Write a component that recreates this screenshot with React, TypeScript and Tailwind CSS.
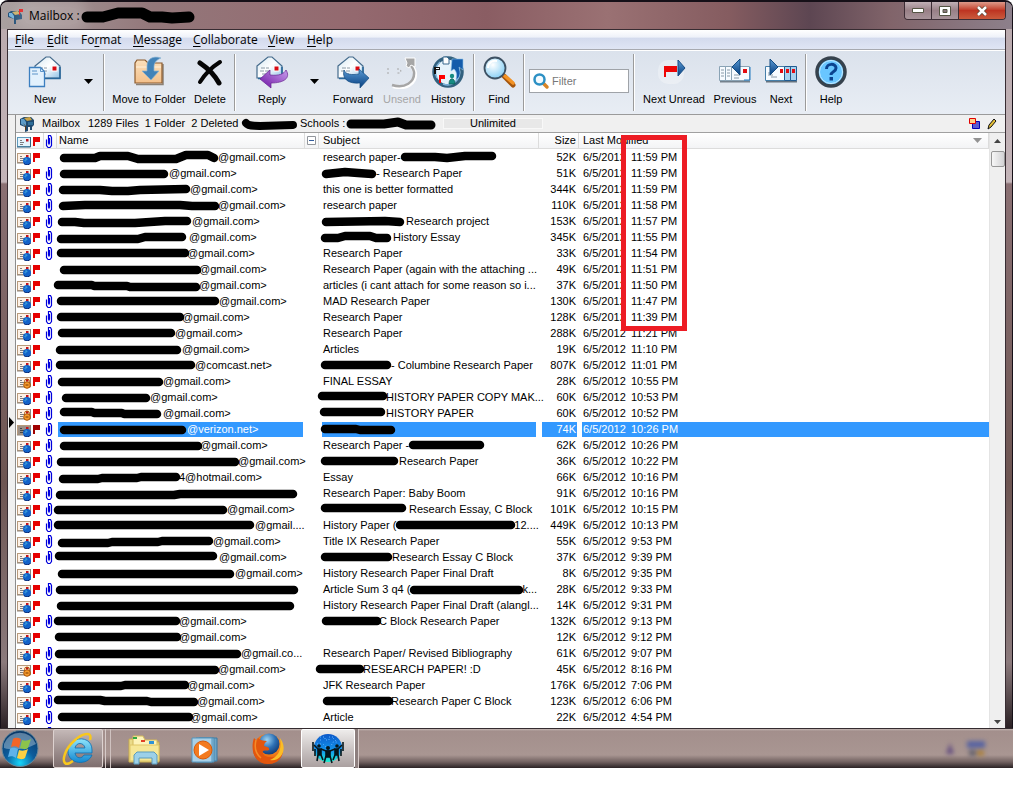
import React from 'react';

type Pt = [number, number];
type Row = {
  lock?: boolean;
  clip?: boolean;
  selected?: boolean;
  bar: Pt[];
  mailX?: number;
  mail?: string;
  pre?: string;
  sbar?: Pt[];
  postX?: number;
  post?: string;
  size: string;
  time: string;
};

const flat = (a: number, b: number, y = 9): Pt[] => [[a + 4, y], [b - 4, y]];

const rows: Row[] = [
  { bar: [[64, 9], [95, 9], [100, 7], [128, 7], [138, 10], [176, 10], [186, 6], [208, 6], [214, 9]], mailX: 218, mail: '@gmail.com>', pre: 'research paper-', sbar: [[410, 8], [440, 8], [452, 9], [470, 7], [497, 7]], size: '52K', time: '11:59 PM' },
  { clip: true, bar: flat(60, 168), mailX: 169, mail: '@gmail.com>', sbar: [[326, 9], [345, 7], [358, 8], [372, 9]], postX: 376, post: '- Research Paper', size: '51K', time: '11:59 PM' },
  { clip: true, bar: [[63, 9], [100, 9], [112, 10], [128, 10], [140, 9], [186, 8]], mailX: 190, mail: '@gmail.com>', pre: 'this one is better formatted', size: '344K', time: '11:59 PM' },
  { clip: true, bar: [[63, 9], [85, 8], [180, 8], [192, 9], [215, 9]], mailX: 218, mail: '@gmail.com>', pre: 'research paper', size: '110K', time: '11:58 PM' },
  { clip: true, bar: [[62, 9], [75, 9], [84, 10], [135, 10], [150, 9], [165, 8], [187, 8]], mailX: 192, mail: '@gmail.com>', sbar: [[326, 9], [385, 8], [400, 9]], postX: 406, post: 'Research project', size: '153K', time: '11:57 PM' },
  { clip: true, bar: [[61, 10], [138, 10], [145, 8], [182, 8]], mailX: 189, mail: '@gmail.com>', sbar: [[325, 9], [338, 9], [345, 7], [370, 7], [376, 9], [387, 9]], postX: 393, post: 'History Essay', size: '345K', time: '11:55 PM' },
  { clip: true, bar: flat(57, 189, 8), mailX: 187, mail: '@gmail.com>', pre: 'Research Paper', size: '33K', time: '11:54 PM' },
  { bar: flat(60, 201), mailX: 199, mail: '@gmail.com>', pre: 'Research Paper (again with the attaching ...', size: '49K', time: '11:51 PM' },
  { bar: [[58, 8], [92, 8], [94, 9], [127, 9], [130, 10], [196, 10]], mailX: 199, mail: '@gmail.com>', pre: 'articles (i cant attach for some reason so i...', size: '37K', time: '11:50 PM' },
  { clip: true, bar: flat(57, 219, 8), mailX: 219, mail: '@gmail.com>', pre: 'MAD Research Paper', size: '130K', time: '11:47 PM' },
  { clip: true, bar: flat(57, 184, 8), mailX: 182, mail: '@gmail.com>', pre: 'Research Paper', size: '128K', time: '11:39 PM' },
  { clip: true, bar: flat(58, 175, 8), mailX: 175, mail: '@gmail.com>', pre: 'Research Paper', size: '288K', time: '11:21 PM' },
  { bar: flat(56, 181), mailX: 182, mail: '@gmail.com>', pre: 'Articles', size: '19K', time: '11:10 PM' },
  { clip: true, bar: flat(56, 195, 8), mailX: 195, mail: '@comcast.net>', sbar: flat(321, 391, 8), postX: 391, post: '- Columbine Research Paper', size: '807K', time: '11:01 PM' },
  { lock: true, clip: true, bar: flat(58, 163), mailX: 163, mail: '@gmail.com>', pre: 'FINAL ESSAY', size: '28K', time: '10:55 PM' },
  { clip: true, bar: flat(62, 150), mailX: 150, mail: '@gmail.com>', sbar: flat(318, 387, 7), postX: 386, post: 'HISTORY PAPER COPY MAK...', size: '60K', time: '10:53 PM' },
  { lock: true, clip: true, bar: [[64, 7], [92, 7], [94, 8], [122, 8], [124, 9], [157, 9]], mailX: 163, mail: '@gmail.com>', sbar: flat(320, 385, 7), postX: 386, post: 'HISTORY PAPER', size: '60K', time: '10:52 PM' },
  { selected: true, clip: true, bar: flat(60, 186), mailX: 187, mail: '@verizon.net>', sbar: [[325, 8], [356, 8], [360, 9], [391, 9]], size: '74K', time: '10:26 PM' },
  { clip: true, bar: flat(60, 202), mailX: 200, mail: '@gmail.com>', pre: 'Research Paper -', sbar: flat(409, 484, 8), size: '62K', time: '10:26 PM' },
  { clip: true, bar: flat(57, 239), mailX: 238, mail: '@gmail.com>', sbar: flat(321, 398, 8), postX: 399, post: 'Research Paper', size: '36K', time: '10:22 PM' },
  { clip: true, bar: [[63, 10], [98, 10], [102, 9], [137, 9], [141, 8], [176, 8]], mailX: 179, mail: '4@hotmail.com>', pre: 'Essay', size: '66K', time: '10:16 PM' },
  { clip: true, bar: [[60, 10], [174, 10], [180, 9], [293, 9]], pre: 'Research Paper: Baby Boom', size: '91K', time: '10:16 PM' },
  { clip: true, bar: flat(54, 227), mailX: 227, mail: '@gmail.com>', sbar: flat(321, 406, 7), postX: 409, post: 'Research Essay, C Block', size: '101K', time: '10:15 PM' },
  { clip: true, bar: flat(54, 254, 8), mailX: 255, mail: '@gmail....', pre: 'History Paper (', sbar: flat(393, 512, 8), postX: 511, post: '12....', size: '449K', time: '10:13 PM' },
  { clip: true, bar: [[62, 10], [108, 10], [112, 9], [158, 9], [162, 8], [209, 8]], mailX: 213, mail: '@gmail.com>', pre: 'Title IX Research Paper', size: '55K', time: '9:53 PM' },
  { clip: true, bar: flat(55, 217, 7), mailX: 219, mail: '@gmail.com>', sbar: flat(321, 392, 8), postX: 392, post: 'Research Essay C Block', size: '37K', time: '9:39 PM' },
  { bar: flat(58, 234), mailX: 235, mail: '@gmail.com>', pre: 'History Research Paper Final Draft', size: '8K', time: '9:35 PM' },
  { clip: true, bar: flat(56, 298), pre: 'Article Sum 3 q4 (', sbar: flat(408, 521), postX: 520, post: 'k...', size: '28K', time: '9:33 PM' },
  { bar: flat(57, 294), pre: 'History Research Paper Final Draft (alangl...', size: '14K', time: '9:31 PM' },
  { clip: true, bar: flat(54, 180, 8), mailX: 179, mail: '@gmail.com>', sbar: flat(322, 381, 8), postX: 379, post: 'C Block Research Paper', size: '132K', time: '9:13 PM' },
  { bar: flat(55, 181, 8), mailX: 179, mail: '@gmail.com>', size: '12K', time: '9:12 PM' },
  { clip: true, bar: flat(55, 241), mailX: 241, mail: '@gmail.co...', pre: 'Research Paper/ Revised Bibliography', size: '61K', time: '9:07 PM' },
  { lock: true, clip: true, bar: flat(56, 219), mailX: 218, mail: '@gmail.com>', sbar: flat(316, 364, 8), postX: 363, post: 'RESEARCH PAPER! :D', size: '45K', time: '8:16 PM' },
  { clip: true, bar: [[62, 9], [121, 9], [125, 8], [185, 8]], mailX: 187, mail: '@gmail.com>', pre: 'JFK Research Paper', size: '176K', time: '7:06 PM' },
  { clip: true, bar: [[58, 7], [100, 7], [105, 8], [147, 8], [151, 9], [194, 9]], mailX: 197, mail: '@gmail.com>', sbar: flat(323, 393, 8), postX: 391, post: 'Research Paper C Block', size: '123K', time: '6:06 PM' },
  { clip: true, bar: flat(58, 193, 8), mailX: 190, mail: '@gmail.com>', pre: 'Article', size: '22K', time: '4:54 PM' },
  { clip: true, bar: flat(58, 60, 30), size: '', time: '' },
];

function Scribble({ pts, origin, width }: { pts: Pt[]; origin: number; width: number }) {
  const d = pts.map(([x, y], i) => `${i ? 'L' : 'M'}${x - origin} ${y - 1}`).join(' ');
  return (
    <svg className="h-[15px] shrink-0 overflow-visible" style={{ width }} aria-hidden="true">
      <path d={d} fill="none" stroke="#000" strokeWidth="8.5" strokeLinecap="round" strokeLinejoin="round" />
    </svg>
  );
}

function LetterIcon({ lock, header, dark }: { lock?: boolean; header?: boolean; dark?: boolean }) {
  const edge = header ? '#5f9bbd' : '#b89a7c';
  const paper = dark ? '#9b8f86' : header ? '#e4f3fc' : '#fdf1e6';
  return (
    <svg width="15" height="16" viewBox="0 0 15 16" aria-hidden="true">
      <rect x="1.5" y="4.5" width="13" height="9" fill={paper} stroke={edge} />
      <path d="M1 14h13.500V4" stroke={header ? '#31617e' : '#8d8278'} fill="none" />
      <path d="M4 7.500h2M4 9.500h4M4 11.500h3" stroke={dark ? '#444' : '#7d7d80'} />
      <rect x="10" y="6" width="2.5" height="2.500" fill="#c3121c" />
      {!header && !lock && (
        <>
          <circle cx="11" cy="12" r="4" fill="#1261c8" />
          <path d="M9 10.500c1.500-1.500 2.500-.5 1.500.5s-1.500 1-2 .5" stroke="#49b3df" fill="none" />
          <path d="M8 14.500a4 4 0 0 0 6.500-.5" stroke="#091f64" fill="none" />
        </>
      )}
      {lock && (
        <>
          <path d="M8.500 10V8.500a2.500 2.500 0 0 1 5 0V10" fill="none" stroke="#b65c0c" />
          <circle cx="11" cy="12" r="3.300" fill="#f79b2c" stroke="#a75207" />
          <path d="M9.500 12h3" stroke="#7a3900" />
        </>
      )}
    </svg>
  );
}

const Flag = ({ dark }: { dark?: boolean }) => (
  <svg width="8" height="16" viewBox="0 0 8 16" aria-hidden="true">
    <path d="M1 4h7v5H3v4H1z" fill={dark ? '#a00000' : '#e60000'} />
  </svg>
);

const Clip = () => (
  <svg width="8" height="16" viewBox="0 0 8 16" aria-hidden="true">
    <path d="M1.500 6.500v6l1.500 2h2l1.500-2v-8L5.500 2.500h-2L3.500 4v6l.5 1 .5-1V5" fill="none" stroke="#0000dc" strokeWidth="1.200" />
  </svg>
);

const EnvelopeShape = () => (
  <>
    <path d="M7 11 18 2h4l10 9v12H7z" fill="url(#env)" stroke="#456b8c" strokeWidth="1.200" />
    <path d="M8 23.500h24V12" fill="none" stroke="#28679b" strokeWidth="1.500" />
    <path d="M11 13h8M10 16h9M12 19h6" stroke="#8a9aa6" strokeDasharray="4 1" />
    <rect x="24" y="11" width="5" height="5" fill="#d80b13" stroke="#fff" />
  </>
);

const Defs = () => (
  <svg width="0" height="0" className="absolute" aria-hidden="true">
    <defs>
      <linearGradient id="env" x1="0" y1="0" x2="1" y2="1"><stop offset="0" stopColor="#d3e6f1" /><stop offset=".5" stopColor="#fff" /><stop offset="1" stopColor="#8ec1e6" /></linearGradient>
      <linearGradient id="blue" x1="0" y1="0" x2="0" y2="1"><stop offset="0" stopColor="#5a9ad4" /><stop offset="1" stopColor="#063f80" /></linearGradient>
      <linearGradient id="violet" x1="1" y1="0" x2="0" y2="1"><stop offset="0" stopColor="#c79cec" /><stop offset="1" stopColor="#6d12a3" /></linearGradient>
      <linearGradient id="tan" x1="0" y1="0" x2="0" y2="1"><stop offset="0" stopColor="#fbe0bb" /><stop offset="1" stopColor="#f3c08b" /></linearGradient>
      <radialGradient id="lens" cx=".4" cy=".35" r=".7"><stop offset="0" stopColor="#fff" /><stop offset="1" stopColor="#83cdf4" /></radialGradient>
      <radialGradient id="orb" cx=".5" cy=".9" r=".9"><stop offset="0" stopColor="#17d5fa" /><stop offset=".45" stopColor="#0c5c9c" /><stop offset="1" stopColor="#0a3766" /></radialGradient>
      <linearGradient id="ie" x1="0" y1="0" x2="0" y2="1"><stop offset="0" stopColor="#8fe4fb" /><stop offset="1" stopColor="#1388d0" /></linearGradient>
      <radialGradient id="fox" cx=".6" cy=".3" r=".8"><stop offset="0" stopColor="#ffc63a" /><stop offset=".6" stopColor="#ec6a12" /><stop offset="1" stopColor="#a92c07" /></radialGradient>
      <radialGradient id="sea" cx=".4" cy=".3" r=".8"><stop offset="0" stopColor="#9ed4f2" /><stop offset=".5" stopColor="#2c6fb4" /><stop offset="1" stopColor="#0f2f66" /></radialGradient>
      <linearGradient id="earth" x1="0" y1="0" x2="0" y2="1"><stop offset="0" stopColor="#0b57c8" /><stop offset=".6" stopColor="#1397ee" /><stop offset="1" stopColor="#1df0d0" /></linearGradient>
    </defs>
  </svg>
);

const icon = (children: React.ReactNode) => (
  <svg width="34" height="34" viewBox="0 0 34 34" className="shrink-0" aria-hidden="true">{children}</svg>
);

const NewIcon = () => icon(
  <>
    <EnvelopeShape />
    <path d="M1.500 12.500h11l4 4v15h-15z" fill="#e2f1fd" stroke="#3c7fc0" strokeWidth="1.300" />
    <path d="M12.500 12.500v4h4M4 16h5M4 19h6" fill="none" stroke="#5b93c8" />
  </>
);
const FolderIcon = () => icon(
  <>
    <path d="M4 29.500h27V9" fill="none" stroke="#8b8176" strokeWidth="1.500" />
    <path d="M3 28V8l2-3h8l3 3h14v20z" fill="url(#tan)" stroke="#8c5a2c" strokeWidth="1.200" />
    <path d="M4 12h25" stroke="#fff1dc" />
    <path d="M29 3c-9-3-14 2-14 8v5h-5l9 9 8-9h-5v-4c0-4 2-7 7-9z" fill="#4283b8" stroke="#8bb4d4" strokeWidth=".7" />
  </>
);
const DeleteIcon = () => icon(
  <>
    <path d="M7 8c6 4 14 11 19 20" fill="none" stroke="#050505" strokeWidth="5" strokeLinecap="round" />
    <path d="M27 7C19 12 12 19 7 27" fill="none" stroke="#050505" strokeWidth="4" strokeLinecap="round" />
  </>
);
const ReplyIcon = () => icon(
  <>
    <g transform="translate(-5 0)"><EnvelopeShape /></g>
    <path d="M31 15c5 8-2 13-15 13v5L5 24l10-9v5c9 1 14-1 16-5z" fill="url(#violet)" stroke="#651c91" strokeWidth=".7" />
  </>
);
const ForwardIcon = () => icon(
  <>
    <g transform="translate(-5 0)"><EnvelopeShape /></g>
    <path d="M8 15c2 5 8 5 15 4v-5l10 9-9 10v-5C12 29 6 24 8 15z" fill="url(#blue)" stroke="#164e83" strokeWidth=".7" />
  </>
);
const UnsendIcon = () => icon(
  <g fill="none" stroke="#fff">
    <path d="M8 31c13 4 23-3 22-13-1-5-3-7-5-9" strokeWidth="4" />
    <path d="M7 30c13 4 23-3 22-13-1-4-2-6-5-8" stroke="#a6a6a6" strokeWidth="2.500" />
    <path d="M20 3h10v9l-4-2-2 3-3-2 1-3z" fill="#a6a6a6" />
    <path d="M2 14h3M2 18h3M12 14h3l1 2-1 2h-3" stroke="#a6a6a6" strokeDasharray="2 2" />
  </g>
);
const HistoryIcon = () => icon(
  <>
    <circle cx="17" cy="17" r="14" fill="#e6f3fb" stroke="#33617f" strokeWidth="3.500" />
    <path d="M6 23a13 13 0 0 1 3-16M12 29c8 3 14-2 16-8" stroke="#7fb5dc" strokeWidth="1.500" fill="none" />
    <path d="M12 2h4l2 2v5h-6z" fill="#fff" stroke="#38688d" />
    <path d="M21 4h11v11l-4-3c2 7 1 10-3 13 1-5 1-8-2-11l-3 2z" fill="#155cab" stroke="#8fc2ea" strokeWidth=".6" />
    <path d="M3 12h6v3H5v4H3z" fill="#111" /><path d="M5 13h3v1H5z" fill="#fff" />
    <path d="M8 20h6v4h-4v4H8z" fill="#f00" />
    <circle cx="21" cy="21" r="2.200" fill="#168c82" /><path d="M18 29c0-7 6-7 6 0z" fill="#168c82" stroke="#07594f" strokeWidth=".7" />
  </>
);
const FindIcon = () => icon(
  <>
    <path d="m22 21 9 9" stroke="#a5560d" strokeWidth="5" strokeLinecap="round" />
    <path d="m23 21 8 7" stroke="#f39325" strokeWidth="3.500" strokeLinecap="round" />
    <circle cx="13" cy="13" r="10.500" fill="url(#lens)" stroke="#3d5163" strokeWidth="1.800" />
    <path d="M6 13c0-5 4-8 9-7" fill="none" stroke="#fff" strokeWidth="2" />
  </>
);
const NextUnreadIcon = () => icon(
  <>
    <rect x="1" y="5" width="26" height="24" rx="10" fill="#fff" opacity=".3" />
    <path d="M7 11h13v6H9v5H7z" fill="#ee0505" />
    <path d="m21 5 7 8-7 8z" fill="url(#blue)" stroke="#174d86" />
  </>
);
const PreviousIcon = () => icon(
  <>
    <path d="M2 26.500h30" stroke="#74818d" strokeWidth="2" />
    <path d="M1.500 11.500h6v14h-6zM7.500 11.500h6v14h-6zM13.500 11.500h18v14h-18z" fill="#f7fbff" stroke="#8aa3b5" />
    <path d="M3 15h3M3 18h3M3 21h3M9 15h3M9 18h3M9 21h3M16 20h6M16 23h5" stroke="#8899a7" />
    <rect x="25" y="14" width="4" height="4" fill="#e20c12" /><path d="M26 25h6V12" fill="none" stroke="#227bc0" />
    <path d="M22 4v16l-8-8z" fill="url(#blue)" stroke="#134c83" />
  </>
);
const NextIcon = () => icon(
  <>
    <path d="M2 26.500h31" stroke="#64727f" strokeWidth="2" />
    <path d="M1.500 11.500h19v14h-19z" fill="#f7fbff" stroke="#467fa9" />
    <path d="M20.500 11.500h6v14h-6zM26.500 11.500h6v14h-6z" fill="#a9d2ef" stroke="#205b91" />
    <path d="M16 14h3v4h-3zM22 14h3v4h-3zM28 14h3v4h-3z" fill="#e20c12" />
    <path d="M4 18h2M4 20h5M7 22h6" stroke="#8899a7" />
    <path d="m6 4 8 8-8 8z" fill="url(#blue)" stroke="#134c83" />
  </>
);
const HelpIcon = () => icon(
  <>
    <circle cx="17" cy="17" r="14" fill="#69c6ff" stroke="#36424d" strokeWidth="3.500" />
    <circle cx="17" cy="17" r="11.500" fill="none" stroke="#c5ebff" />
    <path d="M12.500 14c0-6 9.500-6 9.500-1 0 4-5 3.500-5 7" fill="none" stroke="#0b438f" strokeWidth="3" />
    <rect x="15.500" y="22" width="3.500" height="3.500" fill="#0b438f" />
  </>
);

function Tool({ label, w, children, off }: { label: string; w: string; children: React.ReactNode; off?: boolean }) {
  return (
    <button type="button" disabled={off} className={`flex shrink-0 flex-col items-center pt-1 whitespace-nowrap ${w} ${off ? 'text-[#a6a6a6]' : 'text-black'}`}>
      {children}
      <span className="mt-0.5 leading-4">{label}</span>
    </button>
  );
}
const Drop = ({ label }: { label: string }) => (
  <button type="button" aria-label={label} className="flex w-3 shrink-0 justify-center pt-7">
    <svg width="9" height="5" aria-hidden="true"><path d="M0 0h9L4.500 5z" /></svg>
  </button>
);
const Sep = ({ m = '' }: { m?: string }) => <div className={`my-[3px] w-0.5 shrink-0 border-l border-[#9b9b9b] bg-white ${m}`} />;

const MailboxIcon = () => (
  <svg width="16" height="16" viewBox="0 0 16 16" className="shrink-0" aria-hidden="true">
    <path d="M1 3 5 1h7l3 3v5l-2 2v3h-2v-3H9v4l-3 1v-5L1 9z" fill="#1f4a70" />
    <path d="M2 3h3l2 3v5L2 8z" fill="#5d9cc8" /><path d="m5 2 6-1 2 3-5 1z" fill="#c9a245" />
    <path d="M9 6h5v3H9z" fill="#2f6d98" /><path d="m4 7 3 3v4H6v-4z" fill="#55381d" />
  </svg>
);

const menus: [string, string, string][] = [['', 'F', 'ile'], ['', 'E', 'dit'], ['Fo', 'r', 'mat'], ['', 'M', 'essage'], ['', 'C', 'ollaborate'], ['', 'V', 'iew'], ['', 'H', 'elp']];
const menuWidths = ['w-8', 'w-[34px]', 'w-[52px]', 'w-[60px]', 'w-[75px]', 'w-[39px]', 'w-10'];

function MailRow({ r }: { r: Row }) {
  const hi = r.selected ? 'bg-[#3399ff] text-white' : '';
  const nameStart = 59;
  const subjectStart = 323;
  return (
    <tr className="h-4">
      <td className="p-0 align-top"><LetterIcon lock={r.lock} dark={r.selected} /></td>
      <td className="p-0 align-top"><Flag dark={r.selected} /></td>
      <td className="p-0 pl-px align-top">{r.clip && <Clip />}</td>
      <td className="p-0 pt-px pr-0.5 pl-px align-top">
        <div className={`flex h-[15px] pl-px ${hi}`}>
          {r.size && <Scribble pts={r.bar} origin={nameStart} width={(r.mailX ?? 298) - nameStart} />}
          <span>{r.mail}</span>
        </div>
      </td>
      <td className="p-0" />
      <td className="p-0 pt-px pr-[3px] pl-[3px] align-top">
        <div className={`flex h-[15px] pl-px ${hi}`}>
          {r.pre && <span className="shrink-0 whitespace-pre">{r.pre}</span>}
          {r.sbar && (
            <Scribble
              pts={r.sbar}
              origin={r.pre ? r.sbar[0][0] - 4 : subjectStart}
              width={(r.postX ?? r.sbar[r.sbar.length - 1][0] + 4) - (r.pre ? r.sbar[0][0] - 4 : subjectStart)}
            />
          )}
          <span>{r.post}</span>
        </div>
      </td>
      <td className="p-0 pt-px pr-0.5 pl-[3px] align-top"><div className={`h-[15px] pr-px text-right ${hi}`}>{r.size}</div></td>
      <td className="p-0 pt-px pl-[3px] align-top">
        <div className={`flex h-[15px] pl-px ${hi}`}><span className="w-12">{r.size && '6/5/2012'}</span><span>{r.time}</span></div>
      </td>
    </tr>
  );
}

const th = 'border-r border-b border-[#dcdcdc] p-0 text-left font-normal align-middle';
const captionButton = 'flex items-center justify-center bg-linear-to-b';

export default function App() {
  return (
    <div className="flex h-screen min-h-[400px] flex-col overflow-hidden bg-white pb-[35px] font-['Liberation_Sans',Arial,sans-serif] text-[11px] leading-[15px] text-black">
      <Defs />
      <main className="relative flex min-h-0 flex-1 flex-col rounded-t-lg border-x border-t-2 border-[#161018] bg-[linear-gradient(#b9a9ad_0,#c3b4b8_180px,#8a7073_182px,#6d5552_480px,#8b7a7c_660px,#2a2024_100%)] px-[6px]">
        <header className="-mx-[6px] flex h-[27px] shrink-0 items-start rounded-t-md bg-[linear-gradient(90deg,#a9a0a0_0,#93777a_15%,#94696f_35%,#8a5d63_48%,#9a7173_60%,#855c60_72%,#5d4652_80%,#81646a_88%,#8d808b_100%)] px-[6px]">
          <div className="flex items-center pt-1">
            <svg width="16" height="17" viewBox="0 0 16 17" aria-hidden="true">
              <path d="M1 5 4 3h8l3 4v4l-6 1v4H7v-5L1 9z" fill="#235078" /><path d="M2 5h3l2 3v3L2 8z" fill="#76b3dc" /><path d="m5 4 6-1 2 3-5 1z" fill="#ccb067" /><path d="M12 1h4v3h-3v3h-1z" fill="#e21d1d" />
            </svg>
            <h1 className="rounded-full bg-white/15 pl-1.5 font-['Open_Sans','Noto_Sans',sans-serif] text-xs leading-[18px] shadow-[0_0_12px_8px_rgba(255,255,255,0.15)]">Mailbox :</h1>
            <svg width="118" height="20" viewBox="0 0 118 20" aria-hidden="true"><path d="M7 11h16l15-4h24l8 4 12 0 10 1 17-1" fill="none" stroke="#000" strokeWidth="11" strokeLinecap="round" strokeLinejoin="round" /></svg>
          </div>
          <div className="ml-auto flex h-[18px] overflow-hidden rounded-b border border-t-0 border-[#3d2d35]">
            <button type="button" aria-label="Minimize" className={`${captionButton} w-[27px] border-r border-[#3d2d35] from-[#c1b0b5] via-[#998087] to-[#a8949a]`}><svg width="12" height="5"><path d="M.5.500h11v4H.5z" fill="#fff" stroke="#554" /></svg></button>
            <button type="button" aria-label="Maximize" className={`${captionButton} w-[27px] border-r border-[#3d2d35] from-[#c1b0b5] via-[#998087] to-[#a8949a]`}><svg width="12" height="10"><path d="M.5.500h11v9H.5z" fill="#fff" stroke="#554" /><path d="M4 3.500h4v3H4z" fill="#87777b" stroke="#554" /></svg></button>
            <button type="button" aria-label="Close" className={`${captionButton} w-[46px] from-[#dc9a8a] via-[#be3422] to-[#ca5a3c]`}><svg width="12" height="10"><path d="m2 1 8 8m0-8L2 9" stroke="#543" strokeWidth="4" /><path d="m2 1 8 8m0-8L2 9" stroke="#fff" strokeWidth="2.500" /></svg></button>
          </div>
        </header>

        <div className="flex min-h-0 flex-1 flex-col border border-b-0 border-[#372c32] bg-[#f0f0f0]">
          <nav className="flex h-5 shrink-0 items-center border-b border-[#a7a9b0] bg-[linear-gradient(#fff_0,#eef1f9_38%,#d3daed_42%,#dfe5f4_100%)] pl-[7px] font-['Open_Sans','Noto_Sans',sans-serif] text-xs">
            {menus.map(([a, b, c], i) => (
              <a key={b} href="#" className={`shrink-0 whitespace-nowrap ${menuWidths[i]}`}>{a}<u className="underline-offset-2">{b}</u>{c}</a>
            ))}
          </nav>
          <div className="flex h-[65px] shrink-0 overflow-hidden border-t border-b border-t-white border-b-[#9a9a9a] bg-linear-to-b from-[#dbe2ec] to-[#e8edf4]">
            <Tool label="New" w="w-[74px]"><NewIcon /></Tool>
            <Drop label="New options" />
            <Sep m="ml-[9px]" />
            <Tool label="Move to Folder" w="w-[88px]"><FolderIcon /></Tool>
            <Tool label="Delete" w="w-[34px]"><DeleteIcon /></Tool>
            <Sep m="ml-[7px]" />
            <Tool label="Reply" w="w-[72px]"><ReplyIcon /></Tool>
            <Drop label="Reply options" />
            <Tool label="Forward" w="ml-2 w-[50px]"><ForwardIcon /></Tool>
            <Tool label="Unsend" w="w-12" off><UnsendIcon /></Tool>
            <Tool label="History" w="w-11"><HistoryIcon /></Tool>
            <Sep m="ml-[3px]" />
            <Tool label="Find" w="w-12"><FindIcon /></Tool>
            <Sep />
            <label className="mx-1 mt-[18px] flex h-6 w-[100px] shrink-0 items-center border border-[#9fa3a8] bg-white pl-0.5">
              <svg width="18" height="18" viewBox="0 0 18 18" className="shrink-0" aria-hidden="true"><path d="m11 11 4 4" stroke="#d88425" strokeWidth="3.500" strokeLinecap="round" /><circle cx="7.500" cy="7.500" r="5" fill="#f4fbff" stroke="#2c90c4" strokeWidth="2.500" /></svg>
              <input aria-label="Filter" placeholder="Filter" className="w-full min-w-0 pl-0.5 outline-none placeholder:text-[#777]" />
            </label>
            <Sep />
            <Tool label="Next Unread" w="w-[78px]"><NextUnreadIcon /></Tool>
            <Tool label="Previous" w="w-11"><PreviousIcon /></Tool>
            <Tool label="Next" w="w-12"><NextIcon /></Tool>
            <Sep />
            <Tool label="Help" w="w-12"><HelpIcon /></Tool>
          </div>

          <div className="flex min-h-0 flex-1">
            <div className="flex w-[7px] shrink-0 items-start pt-[302px]">
              <svg width="6" height="11" aria-hidden="true"><path d="M1 0v11l5-5.500z" /></svg>
            </div>
            <section className="relative flex min-w-0 flex-1 flex-col border-l border-[#8d8d8d]">
              <div className="flex h-[18px] shrink-0 items-center border-b border-[#a0a0a0] bg-[#f0f0f0] pl-[3px] whitespace-nowrap">
                <MailboxIcon />
                <span className="ml-[7px] w-[46px]">Mailbox</span>
                <span className="w-[153px] whitespace-pre">1289 Files  1 Folder  2 Deleted</span>
                <svg width="58" height="14" aria-hidden="true"><path d="M5 6c3 4 8 2 14 3l33-1" fill="none" stroke="#000" strokeWidth="8" strokeLinecap="round" /></svg>
                <span className="ml-px w-[46px]">Schools :</span>
                <svg width="90" height="16" aria-hidden="true"><path d="M5 8h33l14-2 8 3h25" fill="none" stroke="#000" strokeWidth="9" strokeLinecap="round" strokeLinejoin="round" /></svg>
                <span className="ml-[7px] w-[100px] border border-[#f8f8f8] bg-[#e8e8e8] text-center leading-[9px]">Unlimited</span>
                <div className="ml-auto flex items-center gap-1.5 pr-2">
                  <svg width="12" height="12" aria-hidden="true"><path d="M3.500 3.500h7v7h-7z" fill="#5a5ad0" stroke="#0000b5" /><path d="M.5.500h6v5h-6z" fill="#ffd28b" stroke="#e00000" /></svg>
                  <svg width="10" height="12" aria-hidden="true"><path d="m1 11 1-4 5-6 2 2-5 6z" fill="#e2bd35" stroke="#111" /></svg>
                </div>
              </div>

              <div className="flex min-h-0 flex-1">
                <div className="min-w-0 flex-1 overflow-hidden bg-white">
                  <table className="w-full table-fixed border-separate border-spacing-0 whitespace-nowrap">
                    <colgroup>
                      <col className="w-4" /><col className="w-3" /><col className="w-[13px]" /><col className="w-[248px]" /><col className="w-3.5" /><col className="w-[220px]" /><col className="w-10" /><col />
                    </colgroup>
                    <thead>
                      <tr className="h-4 bg-linear-to-b from-white to-[#f2f3f5]">
                        <th className="h-4 border-b border-[#dcdcdc] p-0" aria-label="Status"><div className="-mt-px h-[15px]"><LetterIcon header /></div></th>
                        <th className={th} aria-label="Flag"><div className="h-[15px]"><Flag /></div></th>
                        <th className={`${th} pl-px`} aria-label="Attachment"><div className="h-[15px]"><Clip /></div></th>
                        <th className={`${th} pl-0.5`}>Name</th>
                        <th className={`${th} pl-0.5`} aria-label="Collapse"><svg width="9" height="9" aria-hidden="true"><path d="M.5.500h8v8h-8z" fill="#fff" stroke="#92969c" /><path d="M2 4.500h5" stroke="#345d9d" /></svg></th>
                        <th className={`${th} pl-1`}>Subject</th>
                        <th className="border-r border-b border-[#dcdcdc] p-0 pr-0.5 text-right font-normal">Size</th>
                        <th className={`${th} pl-1`}><div className="flex items-center justify-between pr-1.5">Last Modified<svg width="9" height="5" aria-hidden="true"><path d="M0 0h9L4.500 5z" fill="#929292" /></svg></div></th>
                      </tr>
                    </thead>
                    <tbody>{rows.map((r, i) => <MailRow key={i} r={r} />)}</tbody>
                  </table>
                </div>
                <div className="flex w-4 shrink-0 flex-col items-center border-l border-[#e4e4e4] bg-[#efefef] pt-1.5">
                  <svg width="7" height="4" aria-hidden="true"><path d="M0 4h7L3.500 0z" fill="#444" /></svg>
                  <div className="mt-2 h-4 w-3.5 rounded-xs border border-[#979797] bg-linear-to-r from-[#f7f7f7] to-[#d2d2d4]" />
                  <svg width="7" height="4" className="mt-auto mb-1" aria-hidden="true"><path d="M0 0h7L3.500 4z" fill="#444" /></svg>
                </div>
              </div>
              <div className="pointer-events-none absolute top-5 left-[605px] h-[196px] w-[66px] border-5 border-[#ed1c24]" />
            </section>
          </div>
        </div>
      </main>

      <footer className="flex h-10 shrink-0 items-stretch border-t border-[#332b2f] bg-[linear-gradient(#c6b8b5_0,#a38f8c_2px,#a99692_26px,#70605f_33px,#2a2224_39px)]">
        <button type="button" aria-label="Start" className="w-10 shrink-0">
          <svg width="40" height="39" viewBox="0 0 40 39" aria-hidden="true">
            <circle cx="20" cy="19.500" r="18" fill="url(#orb)" stroke="#6a8a9c" />
            <path d="M4 15a17 17 0 0 1 32 0c-9 5-22 7-32 4z" fill="#d4e3ec" opacity=".4" />
            <path d="M13 10c3-2 5-1 8 0l-2 9c-3-2-5-2-8-1z" fill="#f16529" /><path d="M22 11c3 1 5 1 9-1l-3 9c-3 2-5 1-8 0z" fill="#8cc44b" />
            <path d="M10 20c3-2 5-1 8 0l-2 9c-3-2-5-2-8-1z" fill="#5fb3ea" /><path d="M19 21c3 1 5 1 9-1l-3 9c-3 2-5 1-8 0z" fill="#fdd043" />
          </svg>
        </button>
        <button type="button" aria-label="Internet Explorer" className="ml-[13px] flex w-[50px] shrink-0 items-center justify-center rounded-xs border border-[#ddd2d0] bg-linear-to-b from-[#c4b8b7] to-[#7e6e6e]">
          <svg width="34" height="34" viewBox="0 0 34 34" aria-hidden="true">
            <path d="M31 23c-4 11-24 10-24-4C7 4 31 2 31 18v3H14c1 6 7 6 9 2zM14 16h10c-1-6-9-6-10 0z" fill="url(#ie)" stroke="#0a70b4" strokeWidth=".8" fillRule="evenodd" />
            <path d="M29 8c3-10-9-6-16 1C4 17 1 28 4 31c2 2 5 0 8-2" fill="none" stroke="#f8c71d" strokeWidth="2.500" />
          </svg>
        </button>
        <span className="mr-px ml-0.5 w-px bg-[#d6cac8]" /><span className="mr-px w-1 border-r border-[#cfc2c0]" />
        <button type="button" aria-label="Windows Explorer" className="ml-[15px] w-[36px] shrink-0">
          <svg width="36" height="34" viewBox="0 0 36 34" aria-hidden="true">
            <path d="M2 30V7h6l2 3h22v20z" fill="#eadb89" stroke="#c7ab4c" /><path d="M6 26V4h10l2 4h12v18z" fill="#fdf3b9" stroke="#d3b95a" />
            <path d="M6 5h4v2H6z" fill="#30a940" /><path d="M14 8h4v2h-4z" fill="#e24026" /><path d="M22 9h5v3h-5z" fill="#2d93d8" /><path d="M3 13h29v16H3z" fill="#f6e796" stroke="#dec567" />
            <path d="M7 32v-9l3-3h17l3 3v9h-5v-6H12v6z" fill="#9cd0e8" stroke="#5c9cbc" />
          </svg>
        </button>
        <button type="button" aria-label="Media Player" className="ml-[28px] w-[30px] shrink-0">
          <svg width="30" height="34" viewBox="0 0 30 34" aria-hidden="true">
            <path d="M8 6h18v23H8z" fill="#6fa4c5" stroke="#3a7ba4" /><path d="M5 6h18v24H5z" fill="#8bbcda" stroke="#4989b1" /><path d="M1 6h20v24H1z" fill="#a9d0e7" stroke="#5595bc" />
            <circle cx="12" cy="18" r="9" fill="#f37a1f" stroke="#d85a09" /><path d="m8 12 10 6-10 6z" fill="#fff" />
          </svg>
        </button>
        <button type="button" aria-label="Firefox" className="ml-[30px] w-[34px] shrink-0">
          <svg width="34" height="36" viewBox="0 0 34 36" aria-hidden="true">
            <circle cx="17" cy="18" r="15" fill="url(#fox)" />
            <circle cx="18" cy="13" r="10.500" fill="url(#sea)" />
            <path d="M3 7C-1 18 3 33 17 33c10 0 15-7 15-14-3 6-8 8-13 7-5 0-8-3-7-6 2-1 4 0 6-1 1-2-1-3-5-4 0-3 2-4 3-5-4 0-7-1-9-3l-1 3z" fill="#e2560d" />
            <path d="M29 7c2 11-1 18-10 22 12 2 18-12 10-22z" fill="#fbbd26" />
            <path d="M5 9c-2 8 0 14 5 18" stroke="#f58a28" strokeWidth="1.500" fill="none" />
          </svg>
        </button>
        <button type="button" aria-label="FirstClass" className="ml-4 flex w-[54px] shrink-0 items-center justify-center rounded-xs border border-white bg-linear-to-b from-[#eeeceb] to-[#aaa0a0]">
          <svg width="34" height="34" viewBox="0 0 34 34" aria-hidden="true">
            <circle cx="17" cy="16" r="14" fill="url(#earth)" />
            <path d="M9 5h5v3h4V5h4M22 6l4 4h-4l-2 4M6 12h6l3 3M9 8h3" stroke="#63b2ff" fill="none" strokeDasharray="1 2" />
            <g stroke="#06171c" strokeWidth="1.600" fill="none">
              <circle cx="17" cy="16" r="1.200" fill="#06171c" /><path d="M15 19h4v6h-4z" fill="#06171c" /><path d="m15 24-2 7m6-7 2 7M10 17l5 2h4l5-2" />
              <circle cx="8" cy="14" r="1" fill="#06171c" /><path d="M7 17h3v6H7z" fill="#06171c" /><path d="m7 23-1 6m4-6 2 5M3 13l4 4" />
              <circle cx="26" cy="14" r="1" fill="#06171c" /><path d="M24 17h3v6h-3z" fill="#06171c" /><path d="m24 23-2 5m5-5 1 6M31 13l-4 4" />
              <path d="M2 10v9m2-2v7M32 10v9m-2-2v7" />
            </g>
          </svg>
        </button>
        <span className="w-1 border-r border-[#d6cac8] bg-[#8d7f7e]" />
        <div className="mr-7 ml-auto flex items-center gap-3 blur-[2px]">
          <svg width="10" height="14" aria-hidden="true"><path d="M5 1 1 12h8z" fill="#665080" /></svg>
          <svg width="18" height="18" aria-hidden="true"><path d="M0 1h18v7H0z" fill="#5964a0" /><path d="M2 10h7v6H2z" fill="#66636d" /><path d="M10 10h7v6h-7z" fill="#a98143" /></svg>
        </div>
      </footer>
    </div>
  );
}
